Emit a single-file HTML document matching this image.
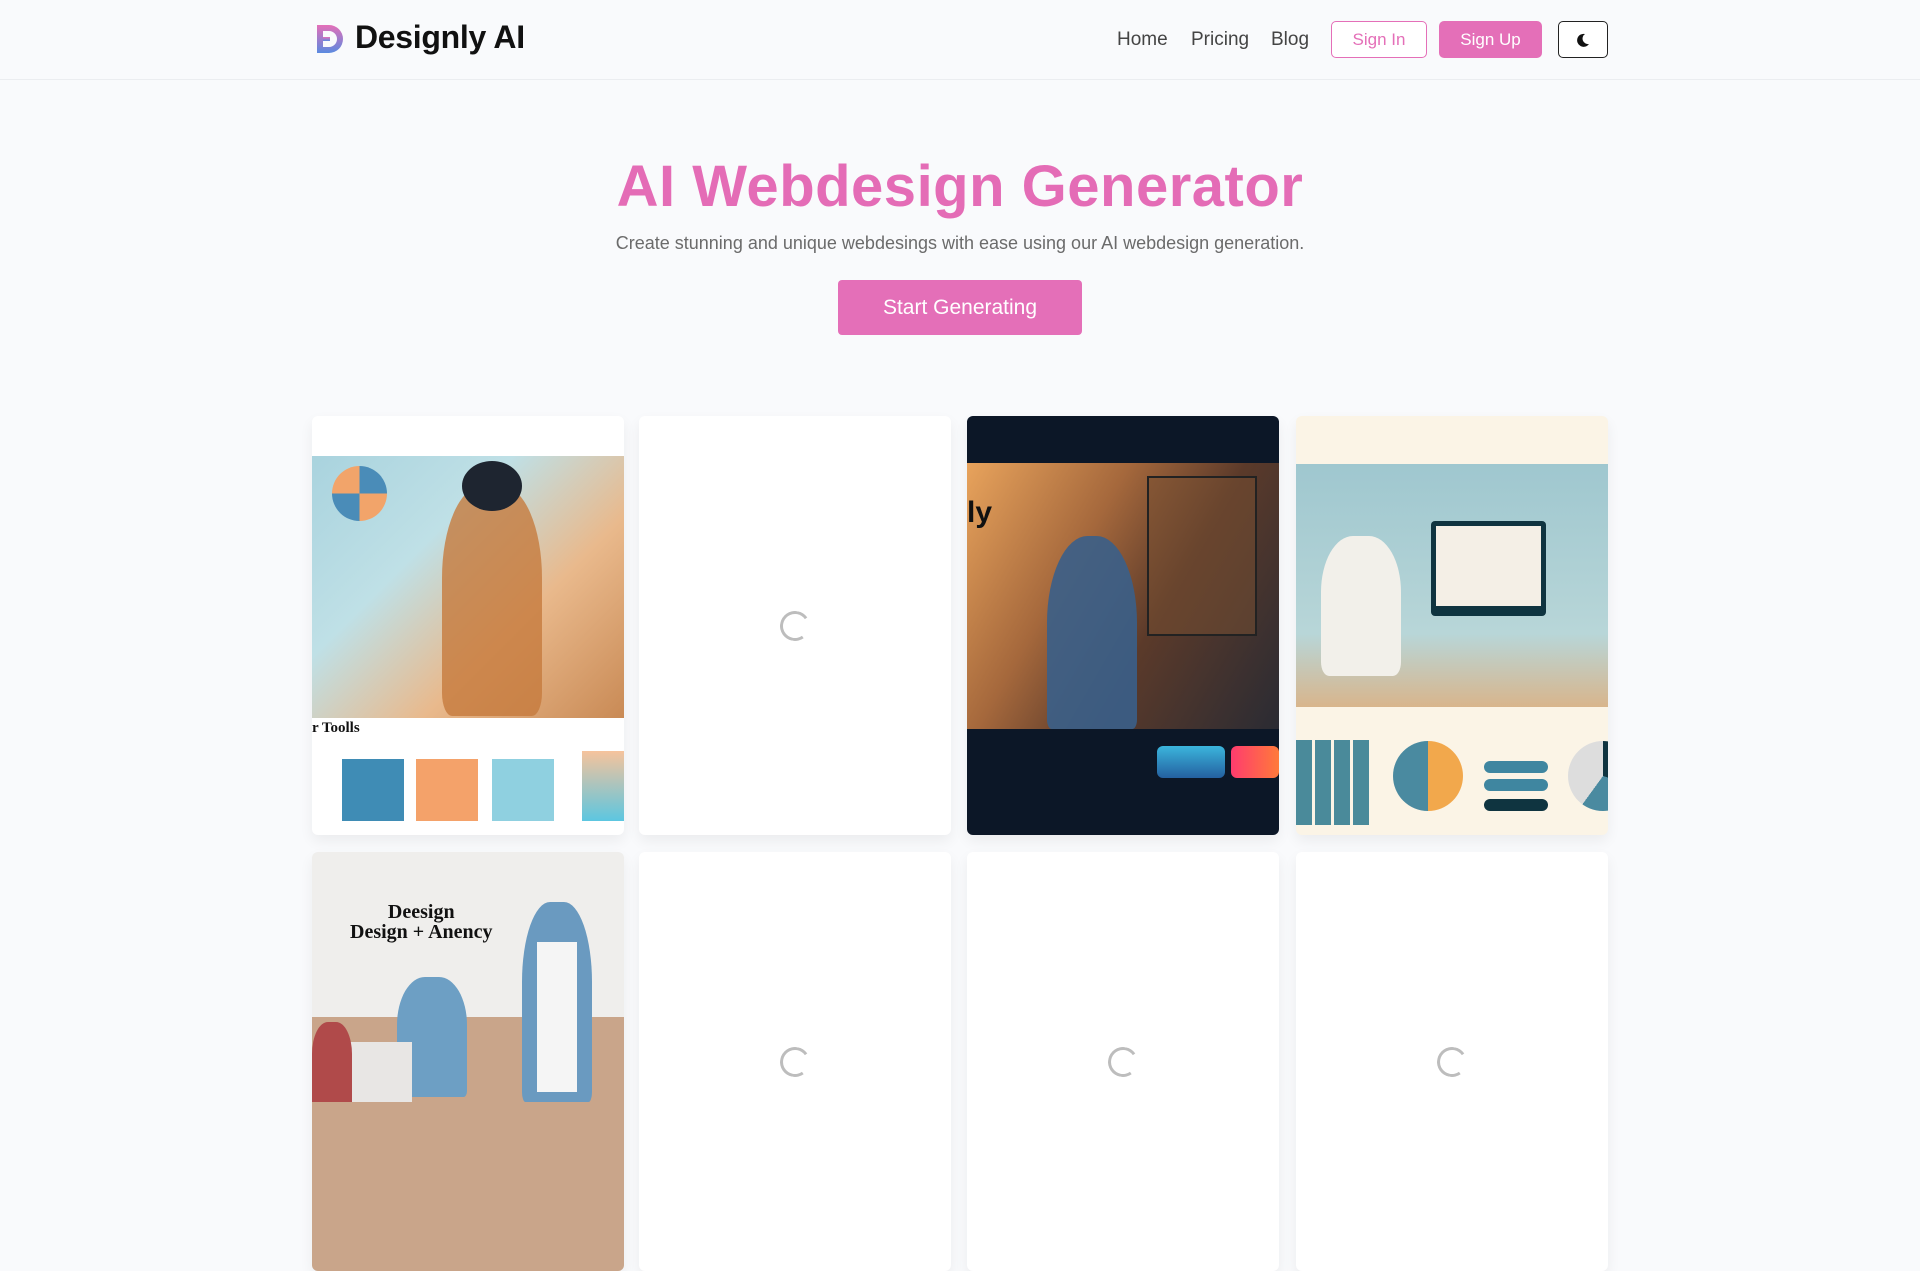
<!DOCTYPE html>
<html><head><meta charset="utf-8"><style>
*{margin:0;padding:0;box-sizing:border-box}
body{width:1920px;height:1080px;overflow:hidden;background:#f9fafc;font-family:"Liberation Sans",sans-serif;position:relative}
.hdr{position:absolute;left:0;top:0;width:1920px;height:80px;border-bottom:1px solid #ebedf0;background:#f9fafc}
.logo{position:absolute;left:314px;top:22px}
.brand{position:absolute;left:355px;top:19px;font-size:32px;font-weight:bold;color:#111;letter-spacing:-0.3px}
.nav{position:absolute;top:29px;font-size:19px;color:#444}
.btn{position:absolute;top:21px;height:37px;border-radius:5px;font-size:17px;display:flex;align-items:center;justify-content:center}
h1{position:absolute;left:0;width:1920px;top:153px;text-align:center;font-size:58px;color:#e46cb6;font-weight:bold;letter-spacing:0.5px}
.sub{position:absolute;left:0;width:1920px;top:233px;text-align:center;font-size:18px;color:#6b6b6b}
.cta{position:absolute;left:838px;top:280px;width:244px;height:55px;background:#e46fb8;border-radius:4px;color:#fff;font-size:21px;display:flex;align-items:center;justify-content:center}
.card{position:absolute;width:312px;height:419px;border-radius:6px;overflow:hidden;background:#fff;box-shadow:0 6px 14px rgba(0,0,0,0.06)}
.spin{position:absolute;width:30px;height:30px;border:3px solid #bdbdbd;border-right-color:transparent;border-radius:50%;left:141px;top:195px;transform:rotate(10deg)}
.abs{position:absolute}
</style></head><body>
<div class="hdr">
<svg class="logo" width="32" height="34" viewBox="0 0 32 34"><defs><linearGradient id="g" x1="0" y1="0" x2="0" y2="1"><stop offset="0" stop-color="#e46fb8"/><stop offset="1" stop-color="#5b8ae0"/></linearGradient></defs><path d="M3 3h12a13 13 0 0 1 0 28H3V3z M9 9v16h6a8 8 0 0 0 0-16z" fill="url(#g)" fill-rule="evenodd"/><path d="M9 15h7v4H9z" fill="url(#g)"/></svg>
<div class="brand">Designly AI</div>
<div class="nav" style="left:1117px">Home</div>
<div class="nav" style="left:1191px">Pricing</div>
<div class="nav" style="left:1271px">Blog</div>
<div class="btn" style="left:1331px;width:96px;border:1px solid #e46fb8;color:#e46fb8;background:#fff">Sign In</div>
<div class="btn" style="left:1439px;width:103px;background:#e46fb8;color:#fff">Sign Up</div>
<div class="btn" style="left:1558px;width:50px;border:1.5px solid #222;background:#fff"><svg width="16" height="16" viewBox="0 0 16 16"><path d="M10 2a6.5 6.5 0 1 0 4 10A5.5 5.5 0 0 1 10 2z" fill="#111"/></svg></div>
</div>
<h1>AI Webdesign Generator</h1>
<div class="sub">Create stunning and unique webdesings with ease using our AI webdesign generation.</div>
<div class="cta">Start Generating</div>

<div class="card" style="left:312px;top:416px">
<div class="abs" style="left:0;top:40px;width:312px;height:262px;background:linear-gradient(135deg,#a9d3de 0%,#bfe0e6 35%,#e9b98c 65%,#c98a55 100%)"></div>
<div class="abs" style="left:20px;top:50px;width:55px;height:55px;border-radius:50%;background:conic-gradient(#4a8cb8 0 25%,#f2a46a 25% 50%,#4a8cb8 50% 75%,#f2a46a 75%)"></div>
<div class="abs" style="left:130px;top:70px;width:100px;height:230px;border-radius:40% 40% 10% 10%;background:#c67a3d;opacity:.8"></div>
<div class="abs" style="left:150px;top:45px;width:60px;height:50px;border-radius:50%;background:#1e2530"></div>
<div class="abs" style="left:0;top:304px;font:bold 15px 'Liberation Serif',serif;color:#111">r Toolls</div>
<div class="abs" style="left:30px;top:343px;width:62px;height:62px;background:#3f8cb5"></div>
<div class="abs" style="left:104px;top:343px;width:62px;height:62px;background:#f4a26a"></div>
<div class="abs" style="left:180px;top:343px;width:62px;height:62px;background:#8fd0e0"></div>
<div class="abs" style="left:270px;top:335px;width:42px;height:70px;background:linear-gradient(#f6c39c,#5cc6e0)"></div>
</div>
<div class="card" style="left:639px;top:416px"><div class="spin"></div></div>
<div class="card" style="left:967px;top:416px;background:#0c1727">
<div class="abs" style="left:0;top:47px;width:312px;height:266px;background:linear-gradient(120deg,#e8a35c 0%,#a5683c 35%,#5b3a2a 60%,#2a2b33 100%)"></div>
<div class="abs" style="left:80px;top:120px;width:90px;height:193px;border-radius:45% 45% 5% 5%;background:#3a5f8a;opacity:.9"></div>
<div class="abs" style="left:180px;top:60px;width:110px;height:160px;border:2px solid #222;background:rgba(120,80,50,.5)"></div>
<div class="abs" style="left:0;top:80px;font:bold 30px 'Liberation Sans',sans-serif;color:#111">ly</div>
<div class="abs" style="left:190px;top:330px;width:68px;height:32px;border-radius:6px;background:linear-gradient(#3bb5dc,#2460a0)"></div>
<div class="abs" style="left:264px;top:330px;width:48px;height:32px;border-radius:6px;background:linear-gradient(90deg,#ff3c6e,#ff7a3a)"></div>
</div>
<div class="card" style="left:1296px;top:416px;background:#fbf4e6">
<div class="abs" style="left:0;top:48px;width:312px;height:243px;background:linear-gradient(180deg,#9fc7cf,#b8d6d8 70%,#d8b58c)"></div>
<div class="abs" style="left:135px;top:105px;width:115px;height:95px;background:#0f3440;border-radius:4px"></div>
<div class="abs" style="left:140px;top:110px;width:105px;height:80px;background:#f4efe6"></div>
<div class="abs" style="left:25px;top:120px;width:80px;height:140px;border-radius:40% 40% 10% 10%;background:#f2f0ea"></div>
<div class="abs" style="left:0;top:324px;width:75px;height:85px;background:repeating-linear-gradient(90deg,#4a8a9a 0 16px,#fbf4e6 16px 19px)"></div>
<div class="abs" style="left:97px;top:325px;width:70px;height:70px;border-radius:50%;background:conic-gradient(#f2a84c 0 50%,#4a8aa0 50%)"></div>
<div class="abs" style="left:188px;top:345px;width:64px;height:12px;border-radius:6px;background:#3f86a0"></div>
<div class="abs" style="left:188px;top:363px;width:64px;height:12px;border-radius:6px;background:#3f86a0"></div>
<div class="abs" style="left:188px;top:383px;width:64px;height:12px;border-radius:6px;background:#0f3440"></div>
<div class="abs" style="left:272px;top:325px;width:70px;height:70px;border-radius:50%;background:conic-gradient(#0f3440 0 30%,#4a8aa0 30% 60%,#ddd 60%)"></div>
</div>
<div class="card" style="left:312px;top:852px;background:#efeeec">
<div class="abs" style="left:38px;top:50px;font:bold 20px 'Liberation Serif',serif;color:#111;line-height:20px;text-align:center">Deesign<br>Design + Anency</div>
<div class="abs" style="left:0;top:165px;width:312px;height:254px;background:#c9a58a"></div>
<div class="abs" style="left:210px;top:50px;width:70px;height:200px;border-radius:40% 40% 5% 5%;background:#6a9ac0"></div>
<div class="abs" style="left:225px;top:90px;width:40px;height:150px;background:#f5f5f5"></div>
<div class="abs" style="left:85px;top:125px;width:70px;height:120px;border-radius:40% 40% 5% 5%;background:#6d9fc4"></div>
<div class="abs" style="left:20px;top:190px;width:80px;height:60px;background:#e8e6e4"></div>
<div class="abs" style="left:0;top:170px;width:40px;height:80px;border-radius:40% 40% 0 0;background:#b04a4a"></div>
</div>
<div class="card" style="left:639px;top:852px"><div class="spin"></div></div>
<div class="card" style="left:967px;top:852px"><div class="spin"></div></div>
<div class="card" style="left:1296px;top:852px"><div class="spin"></div></div>
</body></html>
